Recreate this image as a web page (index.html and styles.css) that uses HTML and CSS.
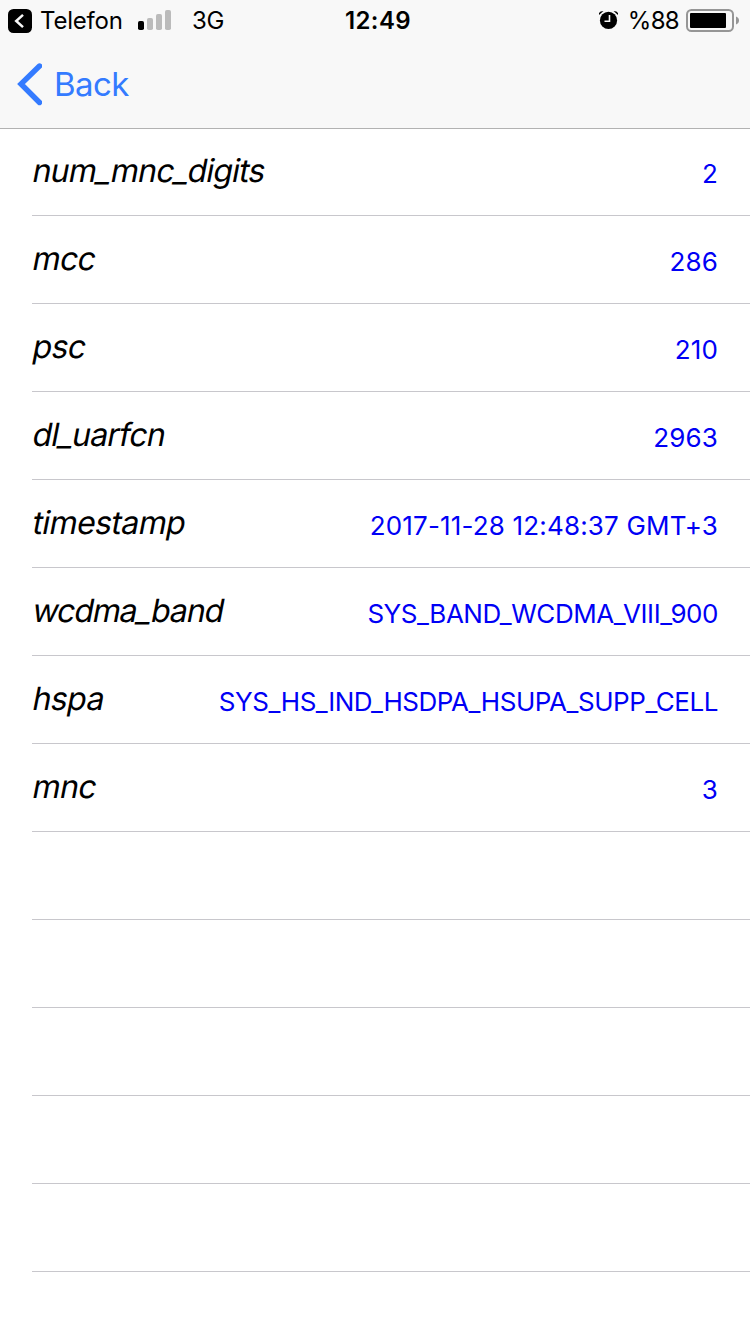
FILE: index.html
```html
<!DOCTYPE html>
<html lang="en">
<head>
<meta charset="utf-8">
<title>Cell info</title>
<link rel="stylesheet" href="styles.css">
</head>
<body>
<header class="header">
  <div class="status">
    <div class="status-left">
      <svg class="return-icon" width="24" height="24" viewBox="0 0 24 24"><rect width="24" height="24" rx="5.5"/><path d="M15 5.8 8.2 12l6.800 6.200" fill="none" stroke="#f8f8f8" stroke-width="2.5"/></svg>
      <span class="app">Telefon</span>
      <svg class="signal" width="33" height="20" viewBox="0 0 33 20"><rect y="11" width="6" height="9" rx="1.8"/><g fill="#bbb"><rect x="9" y="8" width="6" height="12" rx="1.8"/><rect x="18" y="4" width="6" height="16" rx="1.8"/><rect x="27" width="6" height="20" rx="1.8"/></g></svg>
      <span class="network">3G</span>
    </div>
    <span class="clock">12:49</span>
    <div class="status-right">
      <svg class="alarm" width="20" height="20" viewBox="0 0 20 20"><circle cx="9.5" cy="10.400" r="8.600"/><path d="M0 5V3Q1 1 4.500 1zM14.500 1Q18 1 19 3V5z"/><path d="M10.500 5v6.200H5.500" fill="none" stroke="#f8f8f8" stroke-width="1.600"/></svg>
      <span class="percent">%88</span>
      <svg class="battery" width="54" height="24" viewBox="0 0 54 24"><rect x="1" y="1" width="46" height="21" rx="4.5" fill="none" stroke="#969696" stroke-width="2"/><rect x="4" y="4" width="36" height="15" rx="1"/><path d="M50 7.500q3 1.200 3 4t-3 4z" fill="#969696"/></svg>
    </div>
  </div>
  <nav class="nav">
    <svg class="chevron" width="26" height="44" viewBox="0 0 26 44"><path d="M23.500 4 5 22 23.500 40.500" fill="none" stroke="#347bff" stroke-width="5.4" stroke-linecap="round"/></svg>
    <span class="back">Back</span>
  </nav>
</header>
<main class="list">
  <div class="row"><span class="key snake">num_mnc_digits</span><span class="value digits">2</span></div>
  <div class="row"><span class="key">mcc</span><span class="value digits">286</span></div>
  <div class="row"><span class="key">psc</span><span class="value digits">210</span></div>
  <div class="row"><span class="key snake">dl_uarfcn</span><span class="value digits">2963</span></div>
  <div class="row"><span class="key">timestamp</span><span class="value digits">2017-11-28 12:48:37 GMT+3</span></div>
  <div class="row"><span class="key snake-wide">wcdma_band</span><span class="value constant">SYS_BAND_WCDMA_VIII_900</span></div>
  <div class="row"><span class="key">hspa</span><span class="value constant">SYS_HS_IND_HSDPA_HSUPA_SUPP_CELL</span></div>
  <div class="row"><span class="key">mnc</span><span class="value digits">3</span></div>
  <div class="row"></div>
  <div class="row"></div>
  <div class="row"></div>
  <div class="row"></div>
  <div class="row"></div>
</main>
</body>
</html>
```
FILE: styles.css
```css
* { box-sizing: border-box; }
body {
  margin: 0;
  height: 1334px;
  overflow: hidden;
  background: #fff;
  color: #000;
  font-family: Inter, "Liberation Sans", sans-serif;
  font-weight: 380;
}
svg { display: block; flex: none; }
.header {
  height: 129px;
  background: #f8f8f8;
  border-bottom: 1px solid #b2b2b2;
}
.status {
  display: grid;
  grid-template-columns: 1fr auto 1fr;
  height: 40px;
  padding: 0 10px 0 16px;
  font-size: 24px;
  line-height: 42px;
  white-space: nowrap;
}
.status-left, .status-right { display: flex; }
.status-left { margin-left: -8px; }
.status-right { justify-content: flex-end; }
.return-icon { margin: 9px 8px 0 0; }
.app { width: 98px; letter-spacing: -0.2px; }
.signal { margin-top: 10px; }
.network { margin-left: 21px; letter-spacing: -0.2px; }
.clock { font-weight: 600; letter-spacing: 0.4px; }
.alarm { margin: 10px 9px 0 0; }
.percent { margin-right: 7px; letter-spacing: -0.7px; }
.battery { margin-top: 9px; }
.nav {
  display: flex;
  height: 88px;
  padding: 22px 0 0 16px;
  color: #347bff;
}
.back { margin-left: 12px; font-size: 33px; line-height: 44px; letter-spacing: -0.6px; }
.list { margin-top: -1px; }
.row {
  display: flex;
  justify-content: space-between;
  height: 88px;
  margin-left: 32px;
  padding-right: 32px;
  border-bottom: 1px solid #c8c7cc;
  white-space: nowrap;
}
/* Slanted upright face keeps the two-storey "a" */
.key {
  margin-left: -1px;
  font-size: 32px;
  line-height: 86px;
  letter-spacing: -0.6px;
  transform: skewX(-11deg);
  transform-origin: 0 54px;
}
.snake { letter-spacing: -0.8px; }
.snake-wide { letter-spacing: -1.1px; }
.value { font-size: 26px; line-height: 92px; color: #0000f5; }
.digits { letter-spacing: 0.17px; }
.constant { letter-spacing: -0.45px; }
```
